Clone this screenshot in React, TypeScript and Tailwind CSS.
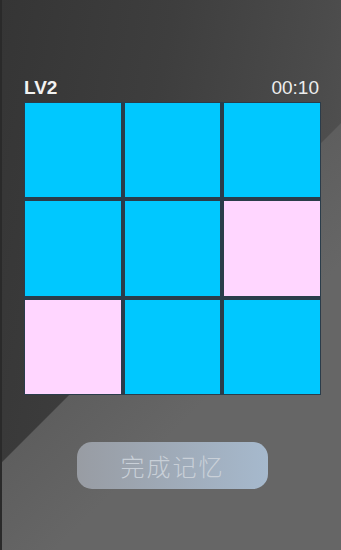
import React from 'react';

const cells = ['c', 'c', 'c', 'c', 'c', 'p', 'p', 'c', 'c'];

const App: React.FC = () => {
  return (
    <div
      className="relative w-[341px] h-[550px] overflow-hidden bg-[linear-gradient(135deg,transparent_52%,#5e5e5e_52.2%,#666666_68%),linear-gradient(100deg,#353535_0%,#3e3e3e_40%,#4b4b4b_75%,#575757_100%)] font-['Liberation_Sans',sans-serif]"
    >
      <div className="absolute left-0 top-0 h-full w-[2px] bg-[#2a2a2a]" />
      <div className="flex flex-col pt-[75px] px-[24px]">
        <div className="flex items-end justify-between h-[22px]">
          <span className="text-[19px] font-bold text-[#f2f2f2] leading-none">LV2</span>
          <span className="text-[19px] text-[#ededed] leading-none mr-[-2px]">00:10</span>
        </div>
        <div className="mt-[5px] w-[297px] h-[293px] grid grid-cols-3 grid-rows-3 gap-[4px] bg-[#2a3c4a] p-[1px]">
          {cells.map((c, i) => (
            <div
              key={i}
              className={c === 'c' ? 'bg-[#00c8ff]' : 'bg-[#ffd6ff]'}
            />
          ))}
        </div>
        <div className="mt-[47px] ml-[53px] w-[191px] h-[47px] rounded-[15px] bg-[linear-gradient(90deg,#989ca3,#a6b9cd)] flex items-center justify-center">
          <span className="text-[24px] text-[#c9d0d8] tracking-[2px] font-['Noto_Sans_CJK_SC',sans-serif] font-light leading-none">
            完成记忆
          </span>
        </div>
      </div>
    </div>
  );
};

export default App;
